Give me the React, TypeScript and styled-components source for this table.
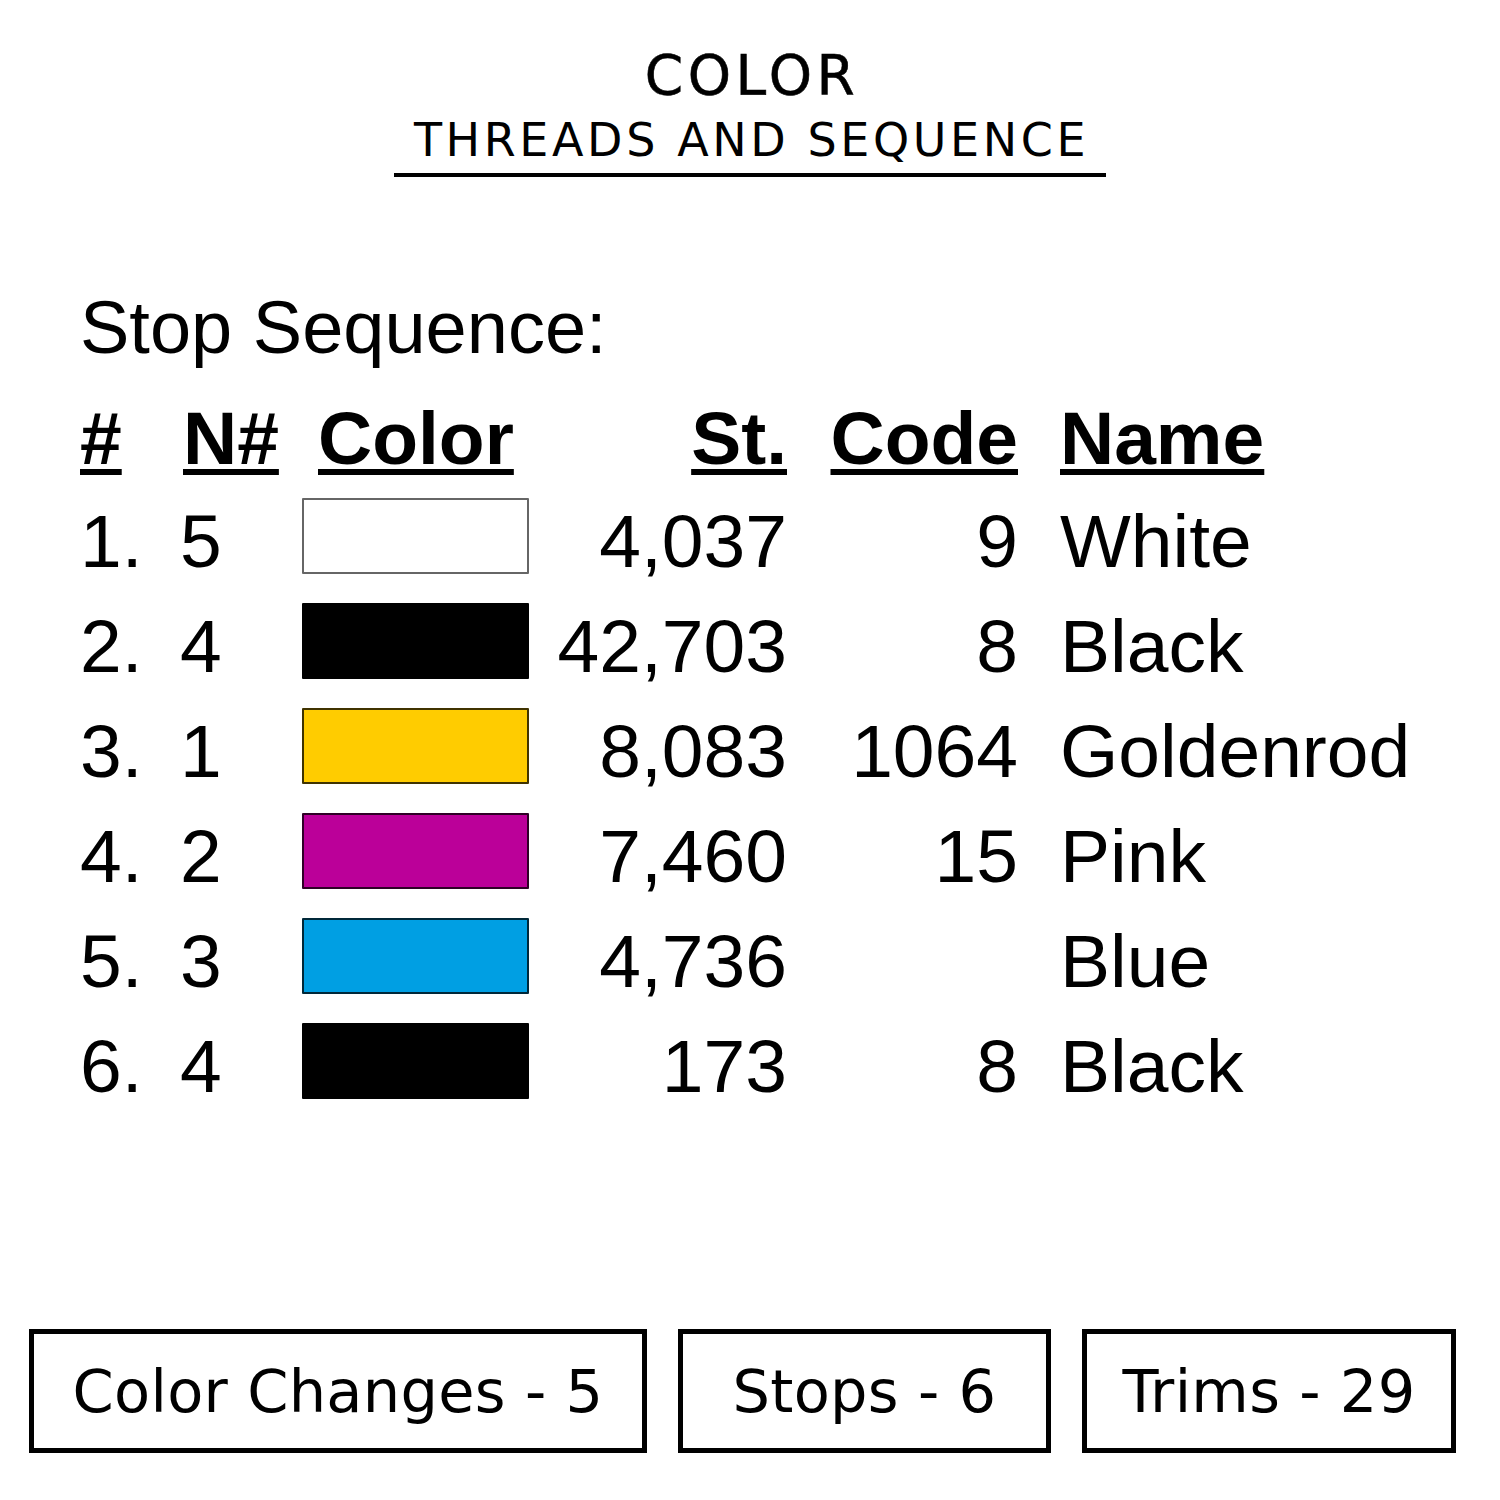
import styled, { createGlobalStyle } from "styled-components";

const GlobalStyle = createGlobalStyle`
  html, body {
    margin: 0;
    padding: 0;
    background: #fff;
  }
  body {
    width: 1500px;
    height: 1500px;
    color: #000;
  }
`;

type Stop = {
  num: string;
  needle: string;
  color: string;
  stitches: string;
  code: string;
  name: string;
};

const stops: Stop[] = [
  { num: "1.", needle: "5", color: "#ffffff", stitches: "4,037", code: "9", name: "White" },
  { num: "2.", needle: "4", color: "#000000", stitches: "42,703", code: "8", name: "Black" },
  { num: "3.", needle: "1", color: "#ffcc00", stitches: "8,083", code: "1064", name: "Goldenrod" },
  { num: "4.", needle: "2", color: "#bb0099", stitches: "7,460", code: "15", name: "Pink" },
  { num: "5.", needle: "3", color: "#009fe3", stitches: "4,736", code: "", name: "Blue" },
  { num: "6.", needle: "4", color: "#000000", stitches: "173", code: "8", name: "Black" },
];

const summary = [
  { label: "Color Changes - 5", width: 618 },
  { label: "Stops - 6", width: 373 },
  { label: "Trims - 29", width: 374 },
];

const App = () => {
  return (
    <Page>
      <GlobalStyle />
      <Heading>
        <Title>COLOR</Title>
        <Subtitle>THREADS AND SEQUENCE</Subtitle>
      </Heading>

      <Sheet>
        <SheetTitle>Stop Sequence:</SheetTitle>
        <Table>
          <Head>#</Head>
          <Head>N#</Head>
          <Head $inset>Color</Head>
          <Head $right>St.</Head>
          <Head $right>Code</Head>
          <Head $name>Name</Head>

          {stops.map((s) => (
            <Row key={s.num}>
              <Cell>{s.num}</Cell>
              <Cell $needle>{s.needle}</Cell>
              <Cell>
                <Swatch $color={s.color} $light={s.color === "#ffffff"} />
              </Cell>
              <Cell $right>{s.stitches}</Cell>
              <Cell $right>{s.code}</Cell>
              <Cell $name>{s.name}</Cell>
            </Row>
          ))}
        </Table>
      </Sheet>

      <Summary>
        {summary.map((item) => (
          <Badge key={item.label} $width={item.width}>
            {item.label}
          </Badge>
        ))}
      </Summary>
    </Page>
  );
};

const Page = styled.div`
  width: 1500px;
  height: 1500px;
  display: flex;
  flex-direction: column;
  background: #fff;
  overflow: hidden;
`;

const Heading = styled.div`
  display: flex;
  flex-direction: column;
  align-items: center;
  padding-top: 48px;
  font-family: "DejaVu Sans", "Open Sans", sans-serif;
`;

const Title = styled.div`
  font-size: 55px;
  font-weight: 400;
  line-height: 1;
  letter-spacing: 4.5px;
  padding-left: 4px;
  -webkit-text-stroke: 0.6px #000;
`;

const Subtitle = styled.div`
  margin-top: 14px;
  padding: 0 17px 10px 20px;
  border-bottom: 4px solid #000;
  font-size: 46px;
  font-weight: 400;
  line-height: 1;
  letter-spacing: 3.6px;
`;

const Sheet = styled.div`
  display: flex;
  flex-direction: column;
  padding-left: 80px;
  margin-top: 114px;
  font-family: "Liberation Sans", Arial, sans-serif;
`;

const SheetTitle = styled.div`
  font-size: 74px;
  line-height: 1;
`;

const Table = styled.div`
  display: grid;
  grid-template-columns: 103px 119px 227px 258px 231px 1fr;
  margin-top: 23px;
  font-size: 75px;
`;

const Head = styled.div<{ $right?: boolean; $name?: boolean; $inset?: boolean }>`
  font-weight: 700;
  line-height: 101px;
  text-decoration: underline;
  text-decoration-thickness: 6px;
  text-underline-offset: 5px;
  text-align: ${(p) => (p.$right ? "right" : "left")};
  padding-left: ${(p) => (p.$name ? "42px" : p.$inset ? "16px" : "0")};
`;

const Row = styled.div`
  display: contents;
`;

const Cell = styled.div<{ $right?: boolean; $name?: boolean; $needle?: boolean }>`
  line-height: 105px;
  height: 105px;
  white-space: nowrap;
  text-align: ${(p) => (p.$right ? "right" : "left")};
  padding-left: ${(p) => (p.$name ? "42px" : "0")};
  margin-left: ${(p) => (p.$needle ? "-3px" : "0")};
`;

const Swatch = styled.div<{ $color: string; $light?: boolean }>`
  box-sizing: border-box;
  width: 227px;
  height: 76px;
  margin-top: 9px;
  background: ${(p) => p.$color};
  border: 2px solid ${(p) => (p.$light ? "#666" : "rgba(0, 0, 0, 0.75)")};
  border-radius: 1px;
`;

const Summary = styled.div`
  display: flex;
  gap: 31px;
  padding-left: 29px;
  margin-top: auto;
  margin-bottom: 47px;
  font-family: "DejaVu Sans", "Open Sans", sans-serif;
`;

const Badge = styled.div<{ $width: number }>`
  box-sizing: border-box;
  width: ${(p) => p.$width}px;
  height: 124px;
  display: flex;
  align-items: center;
  justify-content: center;
  border: 5px solid #000;
  font-size: 59px;
  font-weight: 400;
  line-height: 1;
  letter-spacing: 0.3px;
`;

export default App;
